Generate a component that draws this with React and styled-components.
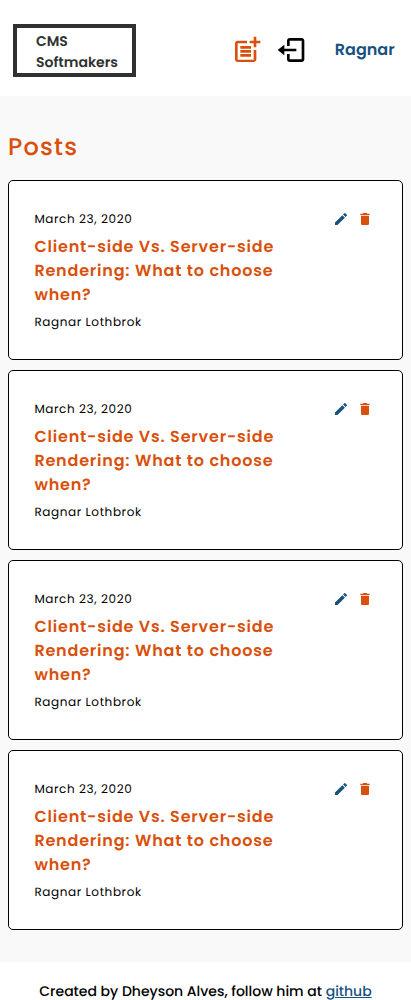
import React from 'react';
import styled, { createGlobalStyle } from 'styled-components';
import { MdPostAdd, MdEdit, MdDelete } from 'react-icons/md';
import { BiLogOut } from 'react-icons/bi';

const ORANGE = '#d9500b';
const BLUE = '#17517e';

const GlobalStyle = createGlobalStyle`
  * { box-sizing: border-box; margin: 0; padding: 0; }
  body {
    background: #fff;
    color: #000;
    font-family: Poppins, Inter, sans-serif;
    text-rendering: geometricPrecision;
    -webkit-font-smoothing: antialiased;
  }
  svg { display: block; flex: none; }
`;

const Page = styled.div`
  height: 1000px;
  overflow: hidden;
  display: flex;
  flex-direction: column;
`;

const Header = styled.header`
  height: 96px;
  flex: none;
  display: flex;
  align-items: center;
  padding: 4px 0 0 13px;
`;

const Logo = styled.div`
  width: 123px;
  height: 53px;
  border: 4px solid #303132;
  color: #303132;
  padding: 3px 0 0 19px;
  font-size: 14px;
  font-weight: 600;
  line-height: 21px;
`;

const LogoLine = styled.span`
  display: block;
`;

const Nav = styled.nav`
  display: flex;
  align-items: center;
  gap: 12px;
  margin-left: 95px;
`;

const NavButton = styled.button`
  border: 0;
  background: none;
  font-size: 32px;
  color: ${({ $color }) => $color};
`;

const UserName = styled.span`
  margin-left: 15.8px;
  color: ${BLUE};
  font-size: 16px;
  font-weight: 600;
  line-height: 24px;
`;

const Main = styled.main`
  flex: none;
  height: 866px;
  background: #f9f9f9;
  padding: 32px 8px 0;
  letter-spacing: 0.05em;
`;

const Heading = styled.h1`
  height: 52px;
  color: ${ORANGE};
  font-size: 24px;
  font-weight: 500;
  line-height: 39px;
  letter-spacing: 0.05em;
`;

const PostList = styled.ul`
  list-style: none;
  display: grid;
  gap: 10px;
`;

const PostCard = styled.li`
  height: 180px;
  border: 1px solid #000;
  border-radius: 5px;
  background: #fff;
  display: flex;
  justify-content: space-between;
  padding: 29px 29px 0 25.4px;
`;

const PostBody = styled.div`
  width: 250px;
`;

const Meta = styled.p`
  font-size: 12px;
  line-height: 20px;
  letter-spacing: 0.05em;
`;

const PostTitle = styled.h2`
  margin: 5px 0 6px;
  color: ${ORANGE};
  font-size: 16px;
  font-weight: 600;
  line-height: 24px;
  letter-spacing: 0.05em;
`;

const Actions = styled.div`
  display: flex;
  gap: 8px;
  padding-top: 1px;
`;

const ActionButton = styled.button`
  width: 16px;
  height: 16px;
  border: 0;
  background: none;
  font-size: 16px;
  color: ${({ $color }) => $color};
`;

const Footer = styled.footer`
  flex: none;
  padding-top: 18px;
  text-align: center;
  font-size: 14px;
  font-weight: 500;
  line-height: 22px;
  white-space: nowrap;
`;

const FooterLink = styled.a`
  color: ${BLUE};
  text-decoration: underline;
`;

const posts = [1, 2, 3, 4].map((id) => ({
  id,
  date: 'March 23, 2020',
  title: 'Client-side Vs. Server-side Rendering: What to choose when?',
  author: 'Ragnar Lothbrok',
}));

const Post = ({ post }) => (
  <PostCard>
    <PostBody>
      <Meta>{post.date}</Meta>
      <PostTitle>{post.title}</PostTitle>
      <Meta>{post.author}</Meta>
    </PostBody>
    <Actions>
      <ActionButton $color={BLUE} aria-label="Edit"><MdEdit /></ActionButton>
      <ActionButton $color={ORANGE} aria-label="Delete"><MdDelete /></ActionButton>
    </Actions>
  </PostCard>
);

export default function App() {
  return (
    <Page>
      <GlobalStyle />
      <Header>
        <Logo>
          <LogoLine>CMS</LogoLine>
          <LogoLine>Softmakers</LogoLine>
        </Logo>
        <Nav>
          <NavButton $color={ORANGE} aria-label="New post"><MdPostAdd /></NavButton>
          <NavButton $color="#000" aria-label="Log out"><BiLogOut /></NavButton>
          <UserName>Ragnar</UserName>
        </Nav>
      </Header>
      <Main>
        <Heading>Posts</Heading>
        <PostList>
          {posts.map((post) => <Post key={post.id} post={post} />)}
        </PostList>
      </Main>
      <Footer>
        Created by Dheyson Alves, follow him at <FooterLink href="#">github</FooterLink>
      </Footer>
    </Page>
  );
}
